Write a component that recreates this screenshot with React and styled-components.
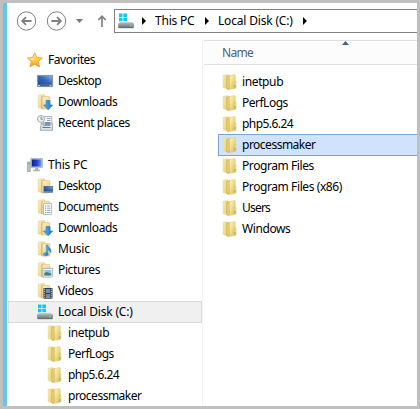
import React from 'react';
import styled, { createGlobalStyle, css } from 'styled-components';

const Global = createGlobalStyle`
  * { box-sizing: border-box; }
  body { margin: 0; background: #bfbfbf; }
`;

const Frame = styled.div`
  width: 420px;
  height: 409px;
  padding: 3px;
  background: #bfbfbf;
  overflow: hidden;
  font: 12px/20px 'Noto Sans', 'Open Sans', sans-serif;
  color: #000;
`;
const Window = styled.div`
  height: 403px;
  border-left: 4px solid #65c7e8;
  background: #fff;
  display: flex;
  flex-direction: column;
`;
const Toolbar = styled.header`
  height: 37px;
  flex: none;
  display: flex;
  align-items: flex-start;
`;
const NavButtons = styled.div`
  width: 107px;
  height: 37px;
`;
const AddressBar = styled.div`
  flex: 1;
  height: 24px;
  margin-top: 6px;
  border: 1px solid #808080;
  border-width: 1px 0 1px 1px;
  display: flex;
  align-items: center;
  padding-left: 3px;
`;
const Crumb = styled.span`
  width: ${p => p.$w}px;
  display: flex;
  white-space: nowrap;
`;
const Chevron = styled.svg`
  width: 4px;
  height: 8px;
  flex: none;
  margin: 0 ${p => p.$after}px 0 ${p => p.$before}px;
`;
const Body = styled.div`
  display: flex;
  flex: 1;
  min-height: 0;
`;
const Tree = styled.nav`
  width: 196px;
  flex: none;
  padding: 9px 0 0 1px;
  border-right: 1px solid #f3f3f3;
`;
const Spacer = styled.div`
  height: 21px;
`;
const Row = styled.div`
  height: 21px;
  display: flex;
  align-items: center;
  gap: ${p => p.$gap || 5}px;
  padding-left: ${p => p.$indent}px;
  white-space: nowrap;
  ${p => p.$current && css`
    height: 22px;
    margin-bottom: -1px;
    padding-left: ${p.$indent - 1}px;
    background: #f0f0f0;
    border: 1px solid #dadada;
    width: 194px;
  `}
  ${p => p.$selected && css`
    height: 22px;
    margin-bottom: -1px;
    padding-left: ${p.$indent - 1}px;
    background: #cfe3fc;
    border: 1px solid #7da2ce;
    border-right: 0;
  `}
`;
const Label = styled.span`
  letter-spacing: ${p => p.$ls || 0}px;
`;
const Icon = styled.svg`
  width: 16px;
  height: 16px;
  flex: none;
  display: block;
`;
const List = styled.main`
  flex: 1;
  padding-left: 1px;
`;
const Header = styled.div`
  height: 25px;
  background: #fcfcfc;
  border: solid #dfdfdf;
  border-width: 1px 0;
  padding-left: 18px;
  display: flex;
  color: #4c607a;
  line-height: 23px;
`;
const SortMark = styled.svg`
  width: 7px;
  height: 4px;
  margin-left: 89px;
`;
const Files = styled.div`
  padding: 6px 0 0 14px;
`;

const spacing = {
  Favorites: -0.45,
  Desktop: -0.5,
  Downloads: -0.38,
  'Recent places': -0.4,
  'This PC': -0.2,
  Documents: -0.47,
  Pictures: -0.37,
  Videos: -0.4,
  'Local Disk (C:)': -0.18,
  inetpub: -0.38,
  PerfLogs: -0.5,
  'php5.6.24': -0.55,
  processmaker: -0.5,
  'Program Files': -0.42,
  'Program Files (x86)': -0.41,
  Users: -0.8,
  Windows: -0.4,
  Name: -0.7,
};
const T = ({ children }) => <Label $ls={spacing[children] ?? -0.25}>{children}</Label>;

const Defs = () => (
  <svg width="0" height="0" style={{ display: 'block' }}>
    <defs>
      <linearGradient id="leaf" x1="0" x2="1" y2=".5">
        <stop offset="0" stopColor="#f8edb8" /><stop offset="1" stopColor="#e8cf70" />
      </linearGradient>
      <linearGradient id="front" x1="0" x2="1" y2="1">
        <stop offset="0" stopColor="#fdf6c2" /><stop offset=".5" stopColor="#efdc88" /><stop offset="1" stopColor="#d3b753" />
      </linearGradient>
      <linearGradient id="pale" x1="0" x2="1" y2="1">
        <stop offset="0" stopColor="#fbefc3" /><stop offset="1" stopColor="#e8cd83" />
      </linearGradient>
      <linearGradient id="screen" x1="0" y1="1" x2="1" y2="0">
        <stop offset="0" stopColor="#1f4da0" /><stop offset=".5" stopColor="#3464b4" /><stop offset="1" stopColor="#86aee0" />
      </linearGradient>
      <linearGradient id="night" x1="0" x2="1">
        <stop offset="0" stopColor="#0a1b9c" /><stop offset=".55" stopColor="#2843cf" /><stop offset="1" stopColor="#6d98f0" />
      </linearGradient>
      <linearGradient id="star" x2="0" y2="1">
        <stop offset="0" stopColor="#fff09a" /><stop offset=".5" stopColor="#ffd043" /><stop offset="1" stopColor="#f7952b" />
      </linearGradient>
      <linearGradient id="metal" x2="0" y2="1">
        <stop offset="0" stopColor="#aeb4b8" /><stop offset="1" stopColor="#5b646a" />
      </linearGradient>
      <linearGradient id="azure" x2="1">
        <stop offset="0" stopColor="#55b6ee" /><stop offset="1" stopColor="#1675c4" />
      </linearGradient>
    </defs>
  </svg>
);

const Folder = () => (
  <Icon viewBox="0 0 16 16">
    <path d="M1 1.2 6 .5V15L1 13.6Z" fill="url(#leaf)" stroke="#e4cf7c" strokeWidth=".4" />
    <path d="M4.5 2.5 8 1V14.5L6 16 4.5 14.6Z" fill="#cbaa50" />
    <path d="M5 3 7 2V14L6 15 5 14Z" fill="#e4ca76" />
    <path d="M8 1.3 12.6.5 13.3 1.3V14.3L7.5 15.6 7.3 2.5Z" fill="url(#front)" stroke="#d8bd59" strokeWidth=".4" />
    <path d="M12.5 7.3H14V13.6L12.5 14.1Z" fill="#f3e6a6" stroke="#d2b750" strokeWidth=".5" />
    <path d="M12.6 11H13.4V13.2H12.6Z" fill="#53a6b5" />
  </Icon>
);
const overlays = {
  desktop: (
    <g>
      <path d="M6.5 8H16V14.8H6.5Z" fill="#4c6582" />
      <path d="M7.2 8.6H15.4V13.2H7.2Z" fill="url(#screen)" />
      <path d="M7 14H15.8" stroke="#9cc6ea" strokeWidth=".7" />
    </g>
  ),
  documents: (
    <g>
      <path d="M6.5 4.5H14.5V15.5H6.5Z" fill="#fff" stroke="#a7afb5" strokeWidth=".8" />
      <path d="M8 7H9.3M8 9.2H9.3M8 11.4H9.3M8 13.5H9.3" stroke="#6295ca" />
      <path d="M10 7H13.4M10 9.2H13.4M10 11.4H13.4M10 13.5H13.4" stroke="#8ba5b7" />
    </g>
  ),
  downloads: (
    <path d="M9.2 6.5H13V11H15.7L11.1 15.7 6.5 11H9.2Z" fill="url(#azure)" stroke="#2a7dc1" strokeWidth=".7" />
  ),
  music: (
    <g fill="url(#azure)" stroke="#2d81be" strokeWidth=".4">
      <path d="M9.3 4H10.8C11.2 7 15.2 7.5 13.7 12 13.3 9.5 11.8 9.2 10.9 9V13.2H9.3Z" />
      <ellipse cx="8.7" cy="13.3" rx="2.5" ry="1.8" />
    </g>
  ),
  pictures: (
    <g>
      <path d="M6 6.4H15.6V15H6Z" fill="#fff" stroke="#96a5af" strokeWidth=".8" />
      <path d="M7.3 7.8H14.3V13.6H7.3Z" fill="#8ac6ed" />
      <path d="M7.3 11 10 10 14.3 11.7V13.6H7.3Z" fill="#477e79" />
    </g>
  ),
  videos: (
    <g>
      <path d="M6.5 5H15.5V15.7H6.5Z" fill="#343a43" />
      <path d="M8.7 6H13.3V10H8.7ZM8.7 11H13.3V15H8.7Z" fill="#5990c9" />
      <path d="M9 9.5 11.2 8 13.2 9.7M9 14.5 11.2 12.8 13.2 14.5" stroke="#c98647" fill="none" />
      <path d="M7.6 5.8V15.5M14.4 5.8V15.5" stroke="#dce1e3" strokeWidth=".9" strokeDasharray="1 1" />
    </g>
  ),
};
const Library = ({ kind }) => (
  <Icon viewBox="0 0 16 16">
    <path d="M1.3 1.2 7 .6 8 1.5V14.8L1.3 13.8Z" fill="url(#pale)" stroke="#dfc47c" strokeWidth=".5" />
    <path d="M5 2.5H12.3L13 3.2V15H5Z" fill="url(#pale)" stroke="#d8b968" strokeWidth=".5" />
    <path d="M4.8 2.3V15.4" stroke="#cda956" strokeWidth=".7" />
    {overlays[kind]}
  </Icon>
);
const Star = () => (
  <Icon viewBox="0 0 16 16">
    <path d="M7.8.7 9.9 5.5 15.4 6 11.3 9.6 12.5 15 7.8 12.3 3 15 4.2 9.6.4 6 5.6 5.5Z" fill="url(#star)" stroke="#ee973d" strokeWidth=".8" strokeLinejoin="round" />
    <path d="M7.8 2.7 6.5 6.3 2.7 6.8 6 8.4Z" fill="#fff6bd" opacity=".8" />
  </Icon>
);
const Monitor = () => (
  <Icon viewBox="0 0 16 16">
    <path d="M.4 2.4H15.6V13.6H.4Z" fill="#8295b3" stroke="#657c9d" strokeWidth=".7" />
    <path d="M1 3H15V11.7H1Z" fill="url(#screen)" />
    <path d="M1 12.7H15" stroke="#385581" />
    <path d="M1 12.7H3M12.5 12.7H14.5" stroke="#b7dbf3" />
  </Icon>
);
const Recent = () => (
  <Icon viewBox="0 0 16 16">
    <path d="M6.5 1.5H14.8V11H6.5Z" fill="#f5f8fa" stroke="#9ca6ad" strokeWidth=".8" />
    <path d="M10 3.5H13.5M10 5.5H13.5" stroke="#99a7b1" />
    <path d="M7.5 7H13.5V10.5H7.5Z" fill="#699ac5" />
    <path d="M4.2 8.3H6.4V10.5H13V8.8H15.6V15.3H3.2Z" fill="#dbe1e4" stroke="#879199" strokeWidth=".7" />
    <path d="M5.5 12.5H13.5" stroke="#6c7880" />
    <circle cx="4" cy="4" r="3.5" fill="#eff2f4" stroke="#9aa4ad" strokeWidth=".9" />
    <path d="M4 1.8V4.2H6" stroke="#596975" fill="none" strokeWidth=".8" />
  </Icon>
);
const Computer = () => (
  <Icon viewBox="0 0 16 16">
    <path d="M.5 5H3.3V14.5H.5Z" fill="#c0c5ca" stroke="#858c93" strokeWidth=".6" />
    <path d="M1 6.8H2.7" stroke="#59b863" />
    <path d="M3.7 1.5H15.5V10.6H3.7Z" fill="#d7dce2" stroke="#a0a7b0" strokeWidth=".7" />
    <path d="M4.7 2.4H14.6V9.6H4.7Z" fill="url(#night)" />
    <path d="M8.2 11H11.2V12.8H13V14.3H6.3V12.8H8.2Z" fill="#a8afb7" />
  </Icon>
);
const Drive = () => (
  <Icon viewBox="0 0 16 16">
    <path d="M1 .5H4.5V4H1ZM5.3.5H9V4H5.3ZM1 4.8H4.5V8.3H1ZM5.3 4.8H9V8.3H5.3Z" fill="#13c5f4" />
    <path d="M2 9H14L15.7 11H.3Z" fill="#c4c9cc" />
    <path d="M.3 10.8H15.7V14.2Q15.7 15 14.7 15H1.3Q.3 15 .3 14.2Z" fill="url(#metal)" stroke="#6d757a" strokeWidth=".4" />
    <path d="M12.2 11.5H13.7V13.7H12.2Z" fill="#59df5b" />
  </Icon>
);

const NavArrows = () => (
  <svg width="107" height="37" viewBox="7 3 107 37" fill="none" stroke="#808080">
    <circle cx="26.5" cy="21" r="9.2" />
    <circle cx="56.5" cy="21" r="9.2" />
    <path d="M31.5 21H23M26 17.2 22.2 21 26 24.8" strokeWidth="1.8" />
    <path d="M51.5 21H60M57 17.2 60.8 21 57 24.8" strokeWidth="1.8" />
    <path d="M76 19H83L79.5 23Z" fill="#777" stroke="none" />
    <path d="M102 27V17M98.3 20 102 16.2 105.7 20" strokeWidth="1.7" />
  </svg>
);
const Arrow = ({ before, after }) => (
  <Chevron viewBox="0 0 4 8" $before={before} $after={after}>
    <path d="M0 0 4 4 0 8Z" />
  </Chevron>
);

const favorites = [[Monitor, 'Desktop'], [() => <Library kind="downloads" />, 'Downloads'], [Recent, 'Recent places']];
const libraries = ['Desktop', 'Documents', 'Downloads', 'Music', 'Pictures', 'Videos'];
const subfolders = ['inetpub', 'PerfLogs', 'php5.6.24', 'processmaker'];
const files = [...subfolders, 'Program Files', 'Program Files (x86)', 'Users', 'Windows'];

export default function App() {
  return (
    <Frame>
      <Global />
      <Defs />
      <Window>
        <Toolbar>
          <NavButtons><NavArrows /></NavButtons>
          <AddressBar>
            <Drive />
            <Arrow before={8} after={9} />
            <Crumb $w={41}><T>This PC</T></Crumb>
            <Arrow before={9} after={9} />
            <Crumb $w={76}><T>Local Disk (C:)</T></Crumb>
            <Arrow before={9} after={0} />
          </AddressBar>
        </Toolbar>
        <Body>
          <Tree>
            <Row $indent={19}><Star /><T>Favorites</T></Row>
            {favorites.map(([Glyph, name]) => (
              <Row key={name} $indent={29}><Glyph /><T>{name}</T></Row>
            ))}
            <Spacer />
            <Row $indent={19}><Computer /><T>This PC</T></Row>
            {libraries.map(name => (
              <Row key={name} $indent={29}><Library kind={name.toLowerCase()} /><T>{name}</T></Row>
            ))}
            <Row $indent={29} $current><Drive /><T>Local Disk (C:)</T></Row>
            {subfolders.map(name => (
              <Row key={name} $indent={39}><Folder /><T>{name}</T></Row>
            ))}
          </Tree>
          <List>
            <Header>
              <T>Name</T>
              <SortMark viewBox="0 0 7 4"><path d="M0 4 3.5 0 7 4Z" fill="#4c607a" /></SortMark>
            </Header>
            <Files>
              {files.map(name => (
                <Row key={name} $indent={4} $gap={4} $selected={name === 'processmaker'}><Folder /><T>{name}</T></Row>
              ))}
            </Files>
          </List>
        </Body>
      </Window>
    </Frame>
  );
}
